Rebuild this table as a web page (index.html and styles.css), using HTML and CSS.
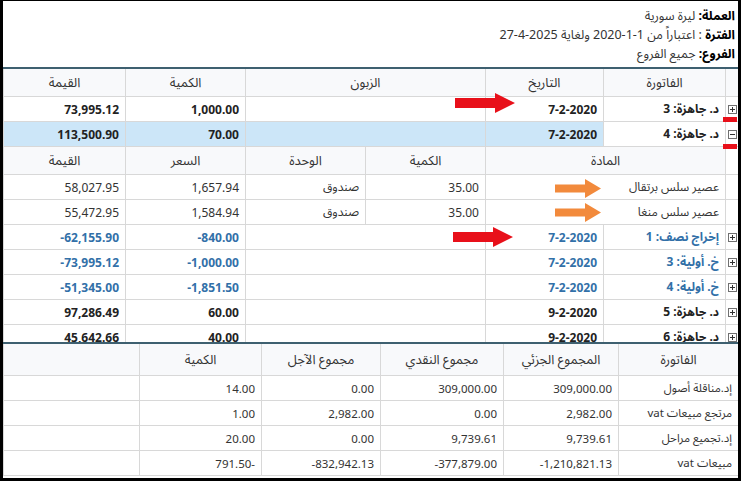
FILE: index.html
```html
<!DOCTYPE html>
<html lang="ar" dir="rtl">
<head>
<meta charset="utf-8">
<link rel="stylesheet" href="styles.css">
</head>
<body>
<div class="frame">
  <div class="info">
    <div class="info-line"><b>العملة:</b> ليرة سورية</div>
    <div class="info-line"><b>الفترة</b> : اعتباراً من 1-1-2020 ولغاية 2025-4-27</div>
    <div class="info-line"><b>الفروع:</b> جميع الفروع</div>
  </div>

  <div class="main">
    <div class="row head main-cols">
      <div class="c"></div>
      <div class="c ctr">الفاتورة</div>
      <div class="c ctr">التاريخ</div>
      <div class="c ctr">الزبون</div>
      <div class="c ctr">الكمية</div>
      <div class="c ctr">القيمة</div>
    </div>
    <div class="row main-cols bold">
      <div class="c exp"><svg width="9" height="9" viewBox="0 0 9 9"><rect x="0.5" y="0.5" width="8" height="8" fill="#fff" stroke="#707070"/><path d="M2 4.5h5M4.5 2v5" stroke="#333"/></svg></div>
      <div class="c">د. جاهزة: 3</div>
      <div class="c num">7-2-2020</div>
      <div class="c"></div>
      <div class="c num">1,000.00</div>
      <div class="c num">73,995.12</div>
    </div>
    <div class="row main-cols bold sel">
      <div class="c exp"><svg width="9" height="9" viewBox="0 0 9 9"><rect x="0.5" y="0.5" width="8" height="8" fill="#fff" stroke="#707070"/><path d="M2 4.5h5" stroke="#333"/></svg></div>
      <div class="c focus">د. جاهزة: 4</div>
      <div class="c num">7-2-2020</div>
      <div class="c"></div>
      <div class="c num">70.00</div>
      <div class="c num">113,500.90</div>
    </div>
    <div class="row head detail-cols">
      <div class="c blank"></div>
      <div class="c ctr">المادة</div>
      <div class="c ctr">الكمية</div>
      <div class="c ctr">الوحدة</div>
      <div class="c ctr">السعر</div>
      <div class="c ctr">القيمة</div>
    </div>
    <div class="row detail-cols reg">
      <div class="c blank"></div>
      <div class="c">عصير سلس برتقال</div>
      <div class="c num">35.00</div>
      <div class="c">صندوق</div>
      <div class="c num">1,657.94</div>
      <div class="c num">58,027.95</div>
    </div>
    <div class="row detail-cols reg">
      <div class="c blank"></div>
      <div class="c">عصير سلس منغا</div>
      <div class="c num">35.00</div>
      <div class="c">صندوق</div>
      <div class="c num">1,584.94</div>
      <div class="c num">55,472.95</div>
    </div>
    <div class="row main-cols bold blue">
      <div class="c exp"><svg width="9" height="9" viewBox="0 0 9 9"><rect x="0.5" y="0.5" width="8" height="8" fill="#fff" stroke="#707070"/><path d="M2 4.5h5M4.5 2v5" stroke="#333"/></svg></div>
      <div class="c">إخراج نصف: 1</div>
      <div class="c num">7-2-2020</div>
      <div class="c"></div>
      <div class="c num">-840.00</div>
      <div class="c num">-62,155.90</div>
    </div>
    <div class="row main-cols bold blue">
      <div class="c exp"><svg width="9" height="9" viewBox="0 0 9 9"><rect x="0.5" y="0.5" width="8" height="8" fill="#fff" stroke="#707070"/><path d="M2 4.5h5M4.5 2v5" stroke="#333"/></svg></div>
      <div class="c">خ. أولية: 3</div>
      <div class="c num">7-2-2020</div>
      <div class="c"></div>
      <div class="c num">-1,000.00</div>
      <div class="c num">-73,995.12</div>
    </div>
    <div class="row main-cols bold blue">
      <div class="c exp"><svg width="9" height="9" viewBox="0 0 9 9"><rect x="0.5" y="0.5" width="8" height="8" fill="#fff" stroke="#707070"/><path d="M2 4.5h5M4.5 2v5" stroke="#333"/></svg></div>
      <div class="c">خ. أولية: 4</div>
      <div class="c num">7-2-2020</div>
      <div class="c"></div>
      <div class="c num">-1,851.50</div>
      <div class="c num">-51,345.00</div>
    </div>
    <div class="row main-cols bold">
      <div class="c exp"><svg width="9" height="9" viewBox="0 0 9 9"><rect x="0.5" y="0.5" width="8" height="8" fill="#fff" stroke="#707070"/><path d="M2 4.5h5M4.5 2v5" stroke="#333"/></svg></div>
      <div class="c">د. جاهزة: 5</div>
      <div class="c num">9-2-2020</div>
      <div class="c"></div>
      <div class="c num">60.00</div>
      <div class="c num">97,286.49</div>
    </div>
    <div class="row main-cols bold">
      <div class="c exp"><svg width="9" height="9" viewBox="0 0 9 9"><rect x="0.5" y="0.5" width="8" height="8" fill="#fff" stroke="#707070"/><path d="M2 4.5h5M4.5 2v5" stroke="#333"/></svg></div>
      <div class="c">د. جاهزة: 6</div>
      <div class="c num">9-2-2020</div>
      <div class="c"></div>
      <div class="c num">40.00</div>
      <div class="c num">45,642.66</div>
    </div>
  </div>

  <div class="summary">
    <div class="row head sum-head sum-cols">
      <div class="c ctr">الفاتورة</div>
      <div class="c ctr">المجموع الجزئي</div>
      <div class="c ctr">مجموع النقدي</div>
      <div class="c ctr">مجموع الآجل</div>
      <div class="c ctr">الكمية</div>
      <div class="c"></div>
    </div>
    <div class="row sum-cols reg">
      <div class="c">إد.مناقلة أصول</div>
      <div class="c num">309,000.00</div>
      <div class="c num">309,000.00</div>
      <div class="c num">0.00</div>
      <div class="c num">14.00</div>
      <div class="c"></div>
    </div>
    <div class="row sum-cols reg">
      <div class="c">مرتجع مبيعات vat</div>
      <div class="c num">2,982.00</div>
      <div class="c num">0.00</div>
      <div class="c num">2,982.00</div>
      <div class="c num">1.00</div>
      <div class="c"></div>
    </div>
    <div class="row sum-cols reg">
      <div class="c">إد.تجميع مراحل</div>
      <div class="c num">9,739.61</div>
      <div class="c num">9,739.61</div>
      <div class="c num">0.00</div>
      <div class="c num">20.00</div>
      <div class="c"></div>
    </div>
    <div class="row sum-cols reg">
      <div class="c">مبيعات vat</div>
      <div class="c num">-1,210,821.13</div>
      <div class="c num">-377,879.00</div>
      <div class="c num">-832,942.13</div>
      <div class="c num">791.50-</div>
      <div class="c"></div>
    </div>
  </div>
</div>

<div class="mark arrow-red a1"><svg width="60" height="20" viewBox="0 0 60 20"><polygon points="0,5 40,5 40,0 60,10 40,20 40,15 0,15" fill="#e8101a"/></svg></div>
<div class="mark arrow-red a2"><svg width="60" height="20" viewBox="0 0 60 20"><polygon points="0,5 40,5 40,0 60,10 40,20 40,15 0,15" fill="#e8101a"/></svg></div>
<div class="mark arrow-orange o1"><svg width="46" height="19" viewBox="0 0 46 19"><polygon points="0,5.5 30,5.5 30,0 46,9.5 30,19 30,13.5 0,13.5" fill="#f28a3c"/></svg></div>
<div class="mark arrow-orange o2"><svg width="46" height="19" viewBox="0 0 46 19"><polygon points="0,5.5 30,5.5 30,0 46,9.5 30,19 30,13.5 0,13.5" fill="#f28a3c"/></svg></div>
<div class="mark dash d1"></div>
<div class="mark dash d2"></div>
</body>
</html>
```

FILE: styles.css
```css
* { box-sizing: border-box; }
html, body { margin: 0; padding: 0; }
body {
  position: relative;
  width: 741px;
  height: 481px;
  overflow: hidden;
  background: #000;
  font-family: "Segoe UI", "Noto Sans", "Noto Sans Arabic", "DejaVu Sans", sans-serif;
  font-size: 12px;
  color: #222;
}
.frame {
  margin: 1px 3px 0 3px;
  width: 735px;
  height: 477px;
  background: #fff;
  display: flex;
  flex-direction: column;
}
.info {
  height: 66px;
  padding: 5px 3px 0 0;
  font-size: 12.5px;
  line-height: 19px;
  color: #333;
}
.info b { color: #000; }

.main {
  height: 275px;
  border-top: 2px solid #3e6070;
  overflow: hidden;
  flex: none;
}
.row {
  display: grid;
  height: 25px;
  border-bottom: 1px solid #d8d8d8;
}
.main-cols { grid-template-columns: 13px 122px 118px 240px 120px 122px; }
.detail-cols { grid-template-columns: 13px 240px 120px 120px 120px 122px; }
.sum-cols { grid-template-columns: 120px 115px 123px 119px 122px 136px; }

.c {
  border-left: 1px solid #d8d8d8;
  padding: 0 6px;
  display: flex;
  align-items: center;
  justify-content: flex-start;
  white-space: nowrap;
  overflow: hidden;
}
.c.ctr { justify-content: center; }
.c.num { direction: ltr; justify-content: flex-end; }
.c.exp { padding: 0; justify-content: center; }
.c.blank { background: #fff; }

.head {
  height: 28px;
  background: #f8f9fb;
  color: #333;
  font-size: 13px;
}
.bold { font-weight: bold; color: #222; }
.blue { color: #3270a8; }
.sel { background: #cce6f8; }
.sel .exp, .sel .focus { background: #fff; }
.reg { font-size: 12px; color: #333; }

.summary {
  flex: 1;
  border-top: 2px solid #3e6070;
}
.sum-head { height: 32px; }
.summary .reg { font-size: 11.5px; }

.mark { position: absolute; line-height: 0; }
.a1 { left: 455px; top: 93px; }
.a2 { left: 453px; top: 227px; }
.o1 { left: 555px; top: 179px; }
.o2 { left: 555px; top: 203px; }
.dash { width: 14px; height: 5px; background: #e8101a; }
.d1 { left: 723px; top: 117px; }
.d2 { left: 723px; top: 144px; }
```
